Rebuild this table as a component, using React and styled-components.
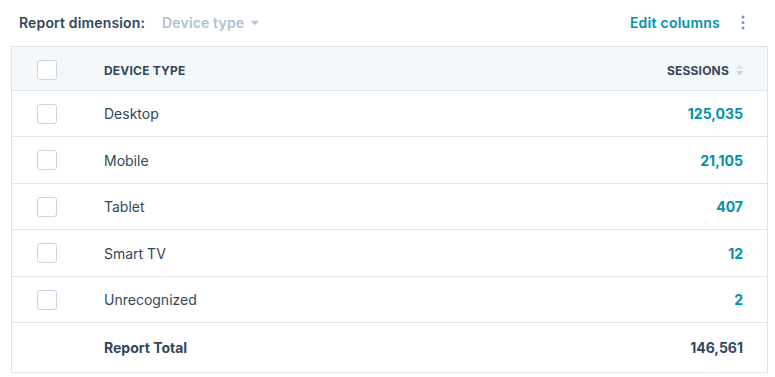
import React from "react";
import styled, { createGlobalStyle } from "styled-components";

const Global = createGlobalStyle`
  html, body { margin: 0; padding: 0; background: #fff; }
  body { font-family: Inter, "Noto Sans", sans-serif; color: #33475b; }
`;

const Page = styled.div`
  width: 775px;
  padding: 0 7px 0 11px;
  box-sizing: border-box;
`;

const Toolbar = styled.div`
  height: 46px;
  display: flex;
  align-items: center;
  padding-left: 8px;
  padding-bottom: 1px;
  box-sizing: border-box;
`;

const Label = styled.span`
  font-size: 14px;
  font-weight: 600;
  letter-spacing: 0.15px;
  color: #33475b;
`;

const Dropdown = styled.span`
  margin-left: 17px;
  font-size: 14px;
  font-weight: 600;
  letter-spacing: 0.15px;
  color: #b0c1d4;
  display: inline-flex;
  align-items: center;
  gap: 7px;
`;

const Spacer = styled.div` flex: 1; `;

const LinkButton = styled.span`
  font-size: 14px;
  font-weight: 600;
  letter-spacing: 0.25px;
  color: #0091ae;
`;

const Kebab = styled.span`
  width: 28px;
  margin-left: 9px;
  margin-right: 11px;
  display: flex;
  justify-content: center;
`;

const Table = styled.div`
  border: 1px solid #dfe3eb;
`;

const Row = styled.div`
  display: grid;
  grid-template-columns: 92px 1fr auto;
  align-items: center;
  box-sizing: content-box;
  height: ${p => p.$h}px;
  padding-top: ${p => (p.$head ? 3 : 0)}px;
  background: ${p => (p.$head ? "#f5f8fa" : "#fff")};
  border-top: ${p => (p.$head ? "none" : "1px solid #dfe3eb")};
  padding-right: 24px;
`;

const CheckCell = styled.div`
  display: flex;
  padding-left: 25px;
`;

const Checkbox = styled.span`
  width: 18px;
  height: 18px;
  border: 1px solid #cbd6e2;
  border-radius: 3px;
  background: #fff;
`;

const HeadText = styled.span`
  font-size: 12px;
  font-weight: 700;
  letter-spacing: 0.2px;
  text-transform: uppercase;
  color: #33475b;
  display: inline-flex;
  align-items: center;
  gap: 7px;
`;

const Cell = styled.span`
  font-size: 14px;
  font-weight: ${p => (p.$bold ? 700 : 400)};
  color: #33475b;
`;

const Num = styled.span`
  font-size: 14px;
  font-weight: 700;
  text-align: right;
  color: ${p => (p.$total ? "#33475b" : "#0091ae")};
`;

const rows = [
  ["Desktop", "125,035", 45],
  ["Mobile", "21,105", 46],
  ["Tablet", "407", 45],
  ["Smart TV", "12", 46],
  ["Unrecognized", "2", 45],
];

export default function App() {
  return (
    <>
      <Global />
      <Page>
        <Toolbar>
          <Label>Report dimension:</Label>
          <Dropdown>
            Device type
            <svg width="8" height="4" viewBox="0 0 8 4"><path d="M0 0h8L4 4z" fill="#b0c1d4" /></svg>
          </Dropdown>
          <Spacer />
          <LinkButton>Edit columns</LinkButton>
          <Kebab>
            <svg width="4" height="15" viewBox="0 0 4 15">
              <circle cx="2" cy="2" r="1.5" fill="#7c98b6" />
              <circle cx="2" cy="7.5" r="1.5" fill="#7c98b6" />
              <circle cx="2" cy="13" r="1.5" fill="#7c98b6" />
            </svg>
          </Kebab>
        </Toolbar>
        <Table>
          <Row $head $h={40}>
            <CheckCell><Checkbox /></CheckCell>
            <HeadText>Device type</HeadText>
            <HeadText>
              Sessions
              <svg width="7" height="14" viewBox="0 0 7 14">
                <path d="M0 6L3.5 1L7 6z" fill="#dfe3eb" />
                <path d="M0 8L3.5 13L7 8z" fill="#cbd6e2" />
              </svg>
            </HeadText>
          </Row>
          {rows.map(([name, val, h]) => (
            <Row key={name} $h={h}>
              <CheckCell><Checkbox /></CheckCell>
              <Cell>{name}</Cell>
              <Num>{val}</Num>
            </Row>
          ))}
          <Row $h={49}>
            <div />
            <Cell $bold>Report Total</Cell>
            <Num $total>146,561</Num>
          </Row>
        </Table>
      </Page>
    </>
  );
}
